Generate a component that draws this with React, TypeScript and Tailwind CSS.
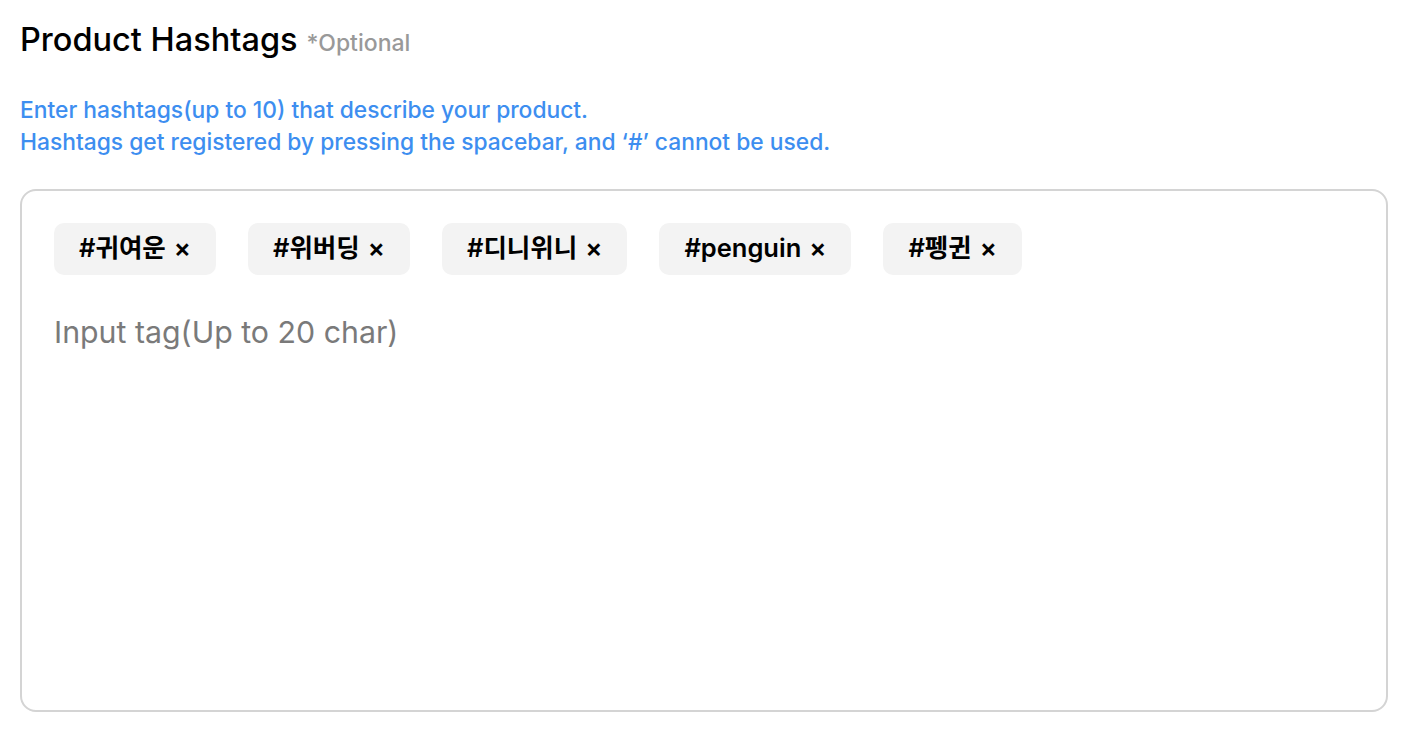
import React from 'react'

const tags = ['귀여운', '위버딩', '디니위니', 'penguin', '펭귄']

export default function App() {
  return (
    <div className="min-h-screen bg-white px-5 pt-[20px]" style={{ fontFamily: 'Inter, "Noto Sans CJK KR", sans-serif' }}>
      <div className="flex items-baseline gap-[9px]">
        <h1 className="text-[32.5px] font-medium text-black leading-[40px]">Product Hashtags</h1>
        <span className="text-[23px] font-medium text-[#999999]">*Optional</span>
      </div>
      <div className="mt-[33px] text-[22.8px] leading-[32px] font-medium text-[#3d8ef0]">
        <p>Enter hashtags(up to 10) that describe your product.</p>
        <p>Hashtags get registered by pressing the spacebar, and ‘#’ cannot be used.</p>
      </div>
      <div className="mt-[31px] h-[523px] w-[1368px] rounded-[16px] border-2 border-[#d4d4d4] px-[32px] pt-[32px]">
        <div className="flex gap-[32px]">
          {tags.map((t) => (
            <div key={t} className="flex h-[52px] items-center rounded-[10px] bg-[#f3f3f3] px-[25px] text-[25.5px] font-semibold text-black">
              #{t} <span className="ml-[8px]">×</span>
            </div>
          ))}
        </div>
        <input
          className="mt-[35px] w-full text-[30.3px] text-black outline-none placeholder:text-[#7a7a7a]"
          placeholder="Input tag(Up to 20 char)"
        />
      </div>
    </div>
  )
}
